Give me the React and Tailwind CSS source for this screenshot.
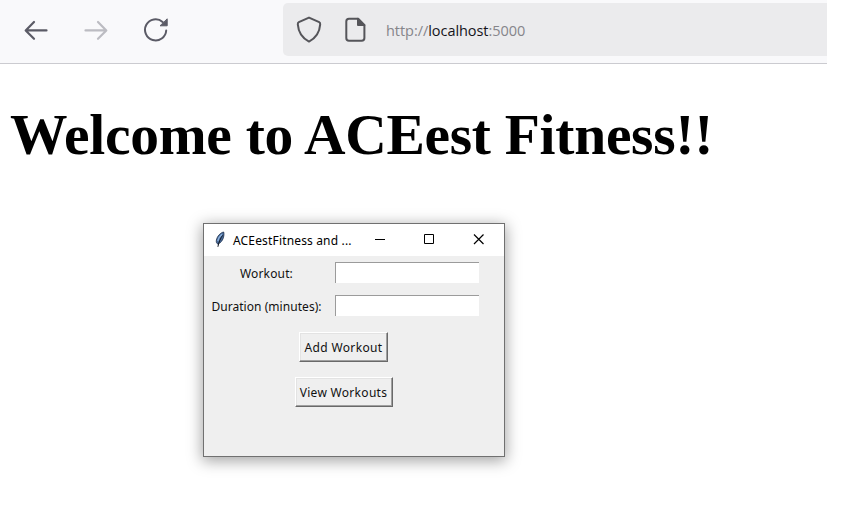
function BrowserBar() {
  return (
    <header className="flex h-16 w-[827px] items-start border-b border-[#cbcbd0] bg-[#f9f9fb] pt-[3px]">
      <div className="flex h-[53px] w-[283px] shrink-0 items-center gap-[34px] pl-[23px] text-[#5b5b66]">
        <svg width="26" height="26" viewBox="0 0 26 26" fill="none" stroke="currentColor" strokeWidth="2.2" strokeLinecap="round" strokeLinejoin="round">
          <path d="M23.5 13.4H3M11 5L2.7 13.4L11 21.8" />
        </svg>
        <svg width="26" height="26" viewBox="0 0 26 26" fill="none" stroke="#bcbcc2" strokeWidth="2.2" strokeLinecap="round" strokeLinejoin="round">
          <path d="M2.5 13.4H23M15 5L23.3 13.4L15 21.8" />
        </svg>
        <svg width="26" height="26" viewBox="0 0 26 26" fill="none" stroke="currentColor" strokeWidth="2" strokeLinecap="round">
          <path d="M23.2 13.5A10.6 10.6 0 1 1 19.6 4.9" />
          <path d="M24.2 2.2V8.8H17.4Z" fill="currentColor" strokeWidth="1" strokeLinejoin="round" />
        </svg>
      </div>
      <div className="flex h-[53px] grow items-center rounded-l-[5px] bg-[#ebebed] pl-[13px]">
        <svg width="26" height="28" viewBox="0 0 26 28" fill="none" stroke="#55555a" strokeWidth="2" strokeLinejoin="round">
          <path d="M13 1.6L23.2 6.2C24.2 6.7 24.3 7.4 24.2 8.4C23.6 16.4 20 22 13 25.6C6 22 2.4 16.4 1.8 8.4C1.7 7.4 1.8 6.7 2.8 6.2Z" />
        </svg>
        <svg className="ml-[22px]" width="24" height="28" viewBox="0 0 24 28" fill="none" stroke="#55555a" strokeWidth="2" strokeLinejoin="round">
          <path d="M14 2.8H5Q2.3 2.8 2.3 5.5V21.9Q2.3 24.7 5 24.7H17.6Q20.4 24.7 20.4 21.9V9.1Z" />
          <path d="M14 2.8V9.1H20.4Z" fill="#55555a" />
        </svg>
        <div className="ml-[18px] whitespace-nowrap pt-[2px] font-['Open_Sans','Noto_Sans',sans-serif] text-[14.5px] tracking-[-0.05px] text-[#85858a]">
          http://<span className="text-[#15141a]">localhost</span>:5000
        </div>
      </div>
    </header>
  );
}

function Feather() {
  return (
    <svg width="10" height="18" viewBox="0 0 10 18" fill="none">
      <path d="M8.7 1C5.5 1.6 2.2 5.2 1.4 9C1 11 1.5 12.4 2.8 13C5.8 12 8.2 9 8.8 5C9 3.6 9 2 8.7 1Z" fill="#4a6d9c" stroke="#1d2d49" strokeWidth=".8" />
      <path d="M7 3.2C5 4.8 3.4 7.4 2.8 10" stroke="#8eb3df" strokeWidth="1.4" />
      <path d="M7.6 4.4C5.8 7 3.8 10.6 2.9 15.8" stroke="#101521" strokeWidth="1" />
    </svg>
  );
}

function Field({ label, className, labelClass }) {
  return (
    <label className={"flex h-[21px] items-center " + className}>
      <span className="flex w-[131px] shrink-0 justify-center pr-[6px] pt-[2px]">
        <span className={"whitespace-nowrap " + labelClass}>{label}</span>
      </span>
      <input className="h-[21px] w-[144px] rounded-none border-l border-t border-[#9b9b9b] bg-white outline-none" />
    </label>
  );
}

function TkButton({ children, className }) {
  return (
    <button
      className={
        "flex h-[30px] items-center justify-center whitespace-nowrap border border-b-[#696969] border-l-white border-r-[#696969] border-t-white bg-[#efefef] pt-[2px] shadow-[inset_-1px_-1px_0_#a0a0a0,inset_1px_1px_0_#e3e3e3] " +
        className
      }
    >
      {children}
    </button>
  );
}

function WorkoutWindow() {
  return (
    <section className="ml-[203px] flex h-[234px] w-[302px] flex-col border border-[#707070] bg-[#efefef] font-['Noto_Sans','Open_Sans',sans-serif] text-[12px] text-[#111] shadow-[0_3px_14px_1px_rgba(0,0,0,0.36)]">
      <div className="flex h-8 shrink-0 items-center bg-white pl-[11px]">
        <Feather />
        <span className="ml-[8px] w-[138px] whitespace-nowrap pt-[2px] tracking-[0.16px] text-black">ACEestFitness and ...</span>
        <div className="flex items-center pl-[3px]">
          <svg width="12" height="12" viewBox="0 0 12 12" stroke="#000" fill="none">
            <path d="M1 5.5H11" />
          </svg>
          <svg className="ml-[38px]" width="12" height="12" viewBox="0 0 12 12" stroke="#000" fill="none">
            <path d="M.5 .5H9.5V9.5H.5Z" />
          </svg>
          <svg className="ml-[37px]" width="12" height="12" viewBox="0 0 12 12" stroke="#000" strokeWidth="1.2" fill="none">
            <path d="M1 .5L10.5 10M10.5 .5L1 10" />
          </svg>
        </div>
      </div>
      <div className="flex flex-col pt-[6px]">
        <Field label="Workout:" labelClass="tracking-[0.15px]" className="" />
        <Field label="Duration (minutes):" labelClass="tracking-[0.05px]" className="mt-3" />
        <div className="flex w-[279px] flex-col items-center gap-[15px] pt-4">
          <TkButton className="w-[89px] tracking-[0.35px]">Add Workout</TkButton>
          <TkButton className="w-[98px] tracking-[0.3px]">View Workouts</TkButton>
        </div>
      </div>
    </section>
  );
}

export default function App() {
  return (
    <main className="h-[532px] w-[845px] overflow-hidden bg-white">
      <BrowserBar />
      <h1 className="h-[159px] whitespace-nowrap pl-[10px] pt-[38px] font-['Liberation_Serif',serif] text-[57.5px] font-bold leading-[66px] tracking-[-0.28px] text-black">
        Welcome to ACEest Fitness!!
      </h1>
      <WorkoutWindow />
    </main>
  );
}
